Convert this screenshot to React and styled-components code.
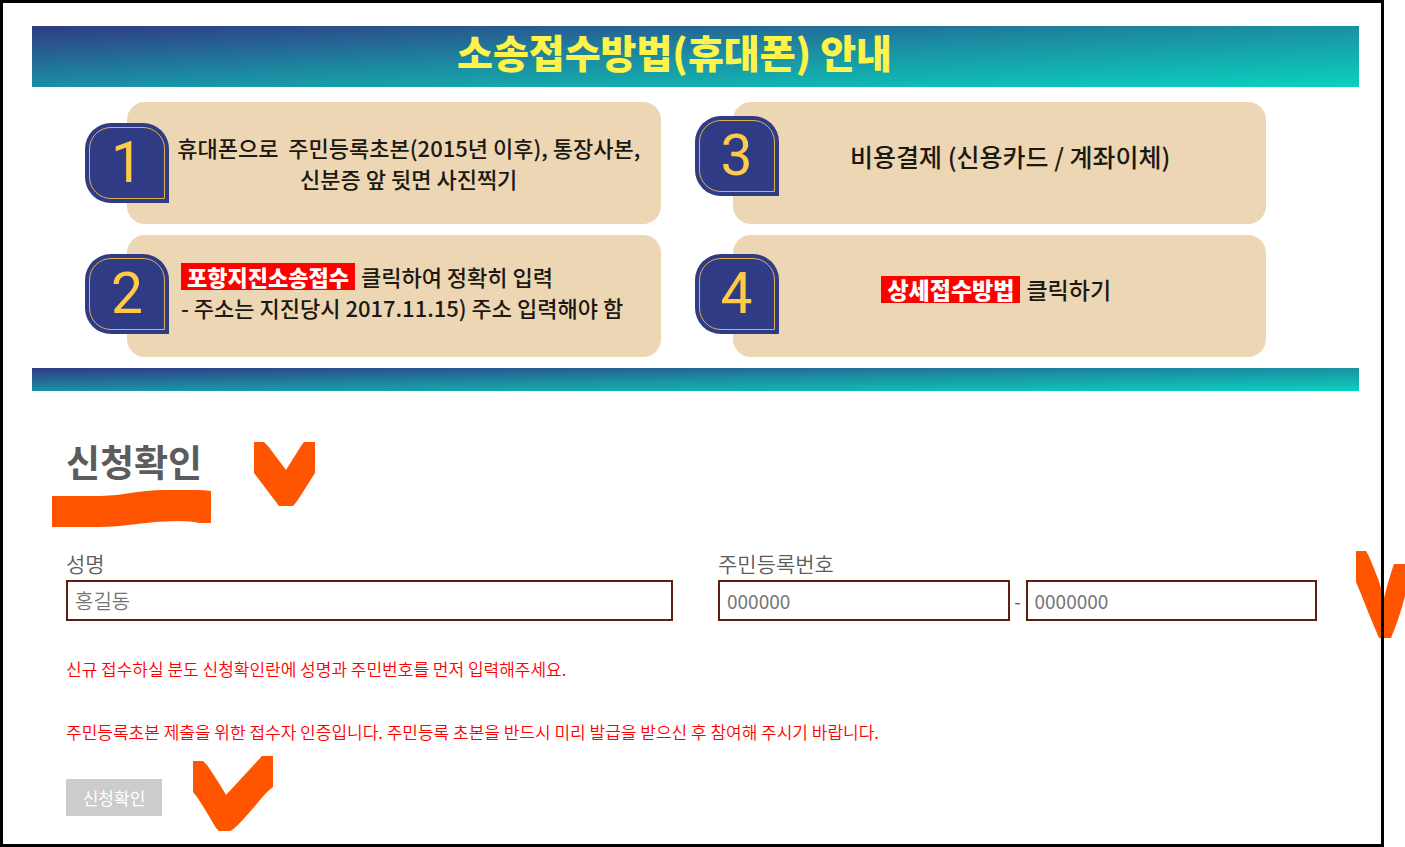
import React from "react";
import styled, { createGlobalStyle } from "styled-components";

const steps = [
  {
    no: 1,
    size: 22,
    start: 8,
    end: 20,
    lines: ["휴대폰으로\u00a0 주민등록초본(2015년 이후), 통장사본,", "신분증 앞 뒷면 사진찍기"],
  },
  { no: 3, size: 25, end: 36, pull: 38, raise: 14, lines: ["비용결제 (신용카드 / 계좌이체)"] },
  {
    no: 2,
    size: 22,
    end: 12,
    raise: 4,
    lift: 4,
    align: "left",
    mark: "포항지진소송접수",
    lines: ["클릭하여 정확히 입력", "- 주소는 지진당시 2017.11.15) 주소 입력해야 함"],
  },
  { no: 4, size: 23, end: 64, pull: 38, raise: 4, lift: 10, mark: "상세접수방법", lines: ["클릭하기"] },
];

function Step({ step }) {
  const { no, size, start, end, pull, raise, lift, align, mark, lines } = step;
  return (
    <Card $raise={raise} $end={end}>
      <Badge $pull={pull}>
        <BadgeInner>{no}</BadgeInner>
      </Badge>
      <CardText $size={size} $start={start} $lift={lift} $align={align}>
        {lines.map((line, i) => (
          <Line key={line}>
            {mark && i === 0 && <Mark>{mark}</Mark>}
            {line}
          </Line>
        ))}
      </CardText>
    </Card>
  );
}

export default function App() {
  return (
    <Frame>
      <GlobalStyle />
      <Banner>
        <BannerTitle>소송접수방법(휴대폰) 안내</BannerTitle>
      </Banner>
      <Steps>
        {steps.map((step) => (
          <Step key={step.no} step={step} />
        ))}
      </Steps>
      <BannerFoot />

      <Form onSubmit={(e) => e.preventDefault()}>
        <Heading>
          신청확인
          <Underline viewBox="0 0 159 38" aria-hidden="true">
            <path d="M0 6H40Q58 6 72 4Q96 0 112 0H144Q153 0 159 1V33H147Q141 31 126 31Q106 31 85 34Q64 37 46 37H0Z" />
          </Underline>
          <HeadingCheck viewBox="0 0 61 65" aria-hidden="true">
            <path d="M0 1H10L14 5L32 29L47 5L50 1H61V32L47 54Q42 62 39 65H25L22 61L0 32Z" />
          </HeadingCheck>
        </Heading>

        <Fields>
          <Field $grow={607}>
            <Label htmlFor="name">성명</Label>
            <Input id="name" placeholder="홍길동" />
          </Field>
          <Field $grow={599}>
            <Label htmlFor="jumin1">주민등록번호</Label>
            <Numbers>
              <Input id="jumin1" placeholder="000000" maxLength={6} $digits />
              <Dash>-</Dash>
              <Input
                aria-label="주민등록번호 뒷자리"
                placeholder="0000000"
                maxLength={7}
                $digits
              />
            </Numbers>
          </Field>
          <FieldCheck viewBox="0 0 49 87" aria-hidden="true">
            <path d="M0 0H10Q12 3 15 10Q23 28 28 47Q33 27 38 13H49V45Q43 68 35 87H23Q12 61 5 43L0 31Z" />
          </FieldCheck>
        </Fields>

        <Notice>신규 접수하실 분도 신청확인란에 성명과 주민번호를 먼저 입력해주세요.</Notice>
        <Notice>
          주민등록초본 제출을 위한 접수자 인증입니다. 주민등록 초본을 반드시 미리 발급을 받으신 후
          참여해 주시기 바랍니다.
        </Notice>

        <Actions>
          <Submit type="submit">신청확인</Submit>
          <SubmitCheck viewBox="0 0 80 75" aria-hidden="true">
            <path d="M0 5H10L14 9Q25 25 33 39L69 0H80V31Q74 35 62 50Q44 71 39 74L37 75H26L23 72Q12 53 4 41L0 36Z" />
          </SubmitCheck>
        </Actions>
      </Form>
    </Frame>
  );
}

const GlobalStyle = createGlobalStyle`
  * {
    box-sizing: border-box;
  }
  body {
    margin: 0;
    background: #fff;
    color: #5c5c5c;
    font-family: "Noto Sans CJK KR", sans-serif;
  }
`;

const Frame = styled.main`
  position: relative;
  margin-right: 21px;
  padding: 26px 25px 31px 32px;
  &::after {
    content: "";
    position: absolute;
    inset: 0;
    border: 3px solid #000;
    pointer-events: none;
  }
`;

const Banner = styled.header`
  display: flex;
  justify-content: center;
  height: 61px;
  padding-right: 42px;
  background: linear-gradient(to bottom right, #2f3b85, #1b8fa3 50%, #0ad2be);
`;

const BannerTitle = styled.h1`
  margin: 0;
  color: #fff34a;
  font-size: 39px;
  font-weight: 900;
  line-height: 50px;
  white-space: nowrap;
`;

const BannerFoot = styled.div`
  height: 23px;
  background: linear-gradient(to bottom right, #2f3b85, #1b8fa3 50%, #0ad2be);
`;

const Steps = styled.section`
  display: grid;
  grid-template-columns: repeat(2, minmax(0, 1fr));
  grid-auto-rows: 122px;
  gap: 11px 72px;
  padding: 15px 93px 11px 95px;
`;

const Card = styled.article`
  display: flex;
  align-items: center;
  padding-right: ${({ $end }) => $end}px;
  padding-bottom: ${({ $raise }) => $raise || 0}px;
  background: #ecd6b4;
  border-radius: 18px;
`;

const Badge = styled.div`
  flex: none;
  width: 84px;
  height: 80px;
  margin-left: -${({ $pull }) => $pull || 42}px;
  padding: 4px;
  background: #2f3b85;
  border-radius: 26px 26px 0 26px;
`;

const BadgeInner = styled.div`
  display: flex;
  align-items: center;
  justify-content: center;
  height: 100%;
  border: 1px solid #e0b050;
  border-radius: 22px 22px 0 22px;
  color: #ffca45;
  font-family: Roboto, sans-serif;
  font-size: 57px;
  line-height: 70px;
`;

const CardText = styled.div`
  flex: 1;
  padding-bottom: ${({ $lift }) => $lift || 0}px;
  padding-left: ${({ $start }) => $start || 12}px;
  color: #1c1812;
  font-size: ${({ $size }) => $size}px;
  font-weight: 500;
  line-height: 31px;
  text-align: ${({ $align }) => $align || "center"};
  white-space: nowrap;
`;

const Line = styled.p`
  margin: 0;
`;

const Mark = styled.strong`
  display: inline-block;
  margin-right: 6px;
  padding: 0 6px;
  background: #f00;
  color: #fff;
  font-weight: 900;
  line-height: 27px;
`;

const Form = styled.form`
  padding: 44px 42px 0 34px;
`;

const Heading = styled.h2`
  position: relative;
  margin: 0 0 62px;
  font-size: 37px;
  font-weight: 700;
  line-height: 52px;
`;

const Scribble = styled.svg`
  position: absolute;
  fill: #ff5500;
`;

const Underline = styled(Scribble)`
  top: 55px;
  left: -14px;
  width: 159px;
`;

const HeadingCheck = styled(Scribble)`
  top: 6px;
  left: 188px;
  width: 61px;
`;

const FieldCheck = styled(Scribble)`
  top: 2px;
  left: calc(100% + 39px);
  width: 49px;
`;

const SubmitCheck = styled(Scribble)`
  top: -23px;
  left: 127px;
  width: 80px;
`;

const Fields = styled.div`
  position: relative;
  display: flex;
  gap: 45px;
  margin-bottom: 36px;
`;

const Field = styled.div`
  flex: ${({ $grow }) => $grow} 1 0;
  min-width: 0;
`;

const Label = styled.label`
  display: block;
  margin-bottom: 3px;
  font-size: 21px;
  font-weight: 350;
  line-height: 28px;
`;

const Input = styled.input`
  width: 100%;
  min-width: 0;
  height: 41px;
  padding: 0 7px;
  border: 2px solid #5c1f10;
  border-radius: 0;
  background: #fff;
  color: #5c5c5c;
  font-family: inherit;
  font-size: ${({ $digits }) => ($digits ? 19 : 20)}px;
  font-weight: ${({ $digits }) => ($digits ? 400 : 350)};
  &::placeholder {
    color: #757575;
  }
`;

const Numbers = styled.div`
  display: flex;
  align-items: center;
`;

const Dash = styled.span`
  flex: none;
  width: 16px;
  font-size: 19px;
  line-height: 28px;
  text-align: center;
`;

const Notice = styled.p`
  margin: 0 0 39px;
  color: #f00;
  font-size: 17px;
  font-weight: 350;
  line-height: 24px;
`;

const Actions = styled.div`
  position: relative;
  margin-top: -4px;
`;

const Submit = styled.button`
  display: block;
  width: 96px;
  height: 37px;
  padding: 0;
  border: 0;
  background: #ccc;
  color: #fff;
  font-family: inherit;
  font-size: 17px;
  cursor: pointer;
`;
